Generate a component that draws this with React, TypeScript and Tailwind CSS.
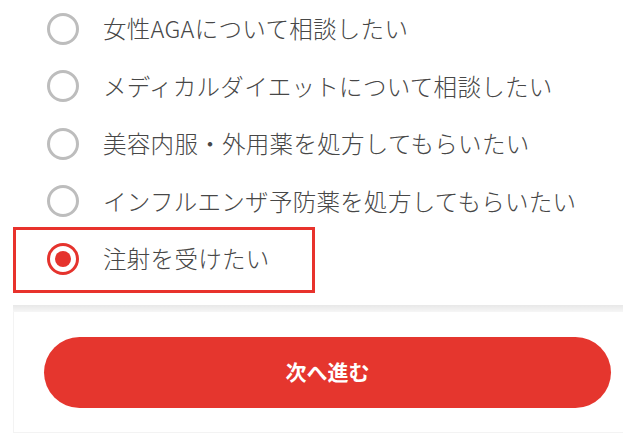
import { useState } from "react";

const options = [
  "女性AGAについて相談したい",
  "メディカルダイエットについて相談したい",
  "美容内服・外用薬を処方してもらいたい",
  "インフルエンザ予防薬を処方してもらいたい",
  "注射を受けたい",
];

export default function App() {
  const [selected, setSelected] = useState(4);

  return (
    <div
      className="w-[630px] h-[436px] bg-white overflow-hidden"
      style={{ fontFamily: '"Noto Sans CJK JP", "Noto Sans", sans-serif' }}
    >
      {/* Options */}
      <div className="flex flex-col">
        {options.map((label, i) => {
          const active = selected === i;
          return (
            <div key={label} className="relative h-[57.5px]">
              {active && (
                <div className="absolute left-[13px] top-[-3px] w-[302px] h-[66px] border-[3px] border-[#e8322c] pointer-events-none" />
              )}
              <button
                type="button"
                onClick={() => setSelected(i)}
                className="flex items-center h-full pl-[47px] gap-[24px] cursor-pointer"
              >
                {active ? (
                  <span className="w-[32px] h-[32px] rounded-full border-[3px] border-[#e5332d] flex items-center justify-center">
                    <span className="w-[16px] h-[16px] rounded-full bg-[#e5332d]" />
                  </span>
                ) : (
                  <span className="w-[32px] h-[32px] rounded-full border-[3px] border-[#bdbdbd]" />
                )}
                <span className="text-[23.5px] leading-none font-light text-[#474747] tracking-[0.3px]">
                  {label}
                </span>
              </button>
            </div>
          );
        })}
      </div>

      {/* Footer card */}
      <div className="mt-[17px] ml-[13px] w-[610px]">
        <div className="h-[7px] bg-gradient-to-b from-[#e8e8e8] to-[#f6f6f6]" />
        <div className="border-l border-b border-[#f3f3f3] pl-[30px] pr-[3px] pt-[25px] pb-[24px]">
          <button
            type="button"
            className="w-[567px] h-[71px] rounded-full bg-[#e5362e] text-white text-[21px] font-bold flex items-center justify-center cursor-pointer"
          >
            次へ進む
          </button>
        </div>
      </div>
    </div>
  );
}
